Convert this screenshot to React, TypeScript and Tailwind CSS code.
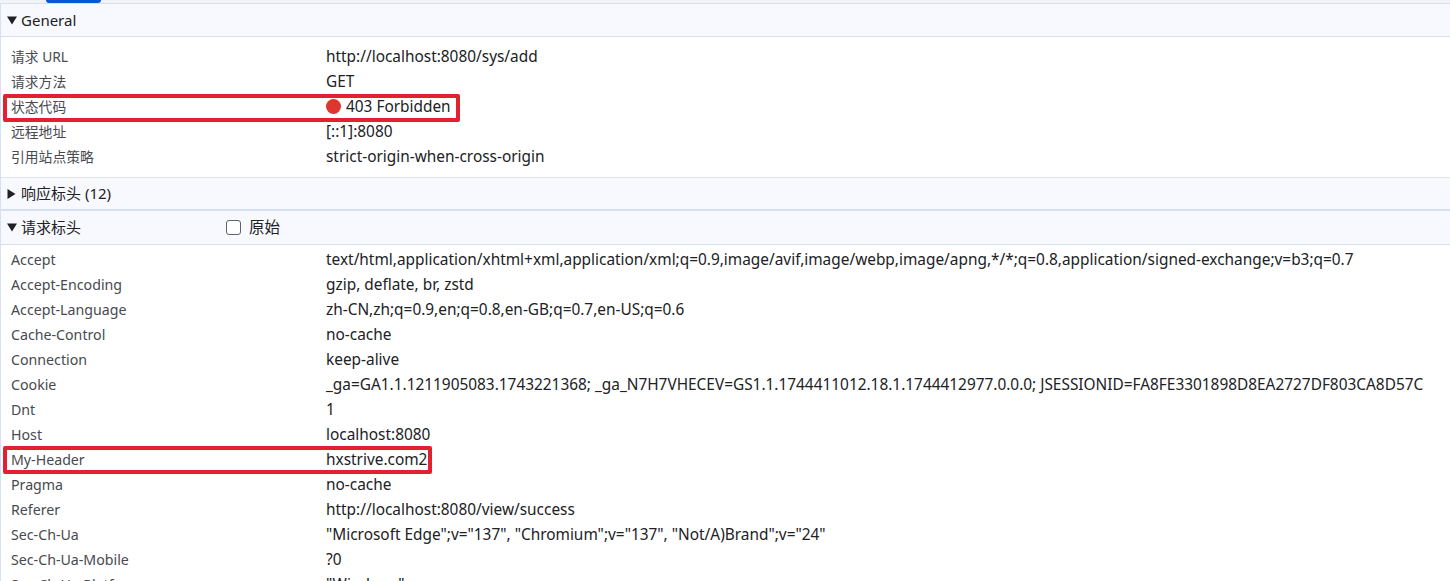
const font = { cjk: "font-['Noto_Sans','Noto_Sans_CJK_SC',sans-serif]" }

const general = [
  ["请求 URL", "http://localhost:8080/sys/add"],
  ["请求方法", "GET"],
  ["状态代码", "403 Forbidden"],
  ["远程地址", "[::1]:8080"],
  ["引用站点策略", "strict-origin-when-cross-origin"],
]

const requestHeaders = [
  ["Accept", "text/html,application/xhtml+xml,application/xml;q=0.9,image/avif,image/webp,image/apng,*/*;q=0.8,application/signed-exchange;v=b3;q=0.7"],
  ["Accept-Encoding", "gzip, deflate, br, zstd"],
  ["Accept-Language", "zh-CN,zh;q=0.9,en;q=0.8,en-GB;q=0.7,en-US;q=0.6"],
  ["Cache-Control", "no-cache"],
  ["Connection", "keep-alive"],
  ["Cookie", "_ga=GA1.1.1211905083.1743221368; _ga_N7H7VHECEV=GS1.1.1744411012.18.1.1744412977.0.0.0; JSESSIONID=FA8FE3301898D8EA2727DF803CA8D57C"],
  ["Dnt", "1"],
  ["Host", "localhost:8080"],
  ["My-Header", "hxstrive.com2"],
  ["Pragma", "no-cache"],
  ["Referer", "http://localhost:8080/view/success"],
  ["Sec-Ch-Ua", "\"Microsoft Edge\";v=\"137\", \"Chromium\";v=\"137\", \"Not/A)Brand\";v=\"24\""],
  ["Sec-Ch-Ua-Mobile", "?0"],
  ["Sec-Ch-Ua-Platform", "\"Windows\""],
]

function Row({ name, value, nameSize }: { name: string; value: string; nameSize: string }) {
  return (
    <div className="flex h-[25px] items-center whitespace-nowrap">
      <div className={`w-[325px] shrink-0 pl-[10px] text-[#474a50] ${nameSize}`}>{name}</div>
      <div className="flex items-center text-[15.4px] text-[#202124]">
        {value === "403 Forbidden" && <span className="mr-[5px] h-[15px] w-[15px] rounded-full bg-[#dc362e]" />}
        {value}
      </div>
    </div>
  )
}

function Header({ open, title, h, children }: { open: boolean; title: string; h: string; children?: React.ReactNode }) {
  return (
    <div className={`flex ${h} items-center border-[#d6e0f5] bg-[#f8f9fe] pl-[6px] text-[15px] text-[#202124]`}>
      {open ? (
        <svg width="10" height="9" viewBox="0 0 10 9" className="mr-[4px]"><path d="M0 0.5h10L5 8.5z" fill="#202124" /></svg>
      ) : (
        <svg width="9" height="10" viewBox="0 0 9 10" className="mr-[5px]"><path d="M0.5 0v10L8.5 5z" fill="#202124" /></svg>
      )}
      <span>{title}</span>
      {children}
    </div>
  )
}

export default function App() {
  return (
    <div className={`relative h-[581px] w-[1450px] overflow-hidden bg-white leading-[25px] ${font.cjk}`}>
      <div className="h-[4px] border-b border-[#d6e0f5] bg-[#f1f3f9] pl-[46px]">
        <div className="h-[3px] w-[55px] rounded-b-[3px] bg-[#0b57d0]" />
      </div>
      <div className="border-l border-[#d6e0f5]">
        <Header open title="General" h="h-[33px] border-b" />
        <div className="border-b border-[#e0e3e8] pt-[7px] pb-[8px]">
          {general.map(([name, value]) => <Row key={name} name={name} value={value} nameSize="text-[13.8px]" />)}
        </div>
        <Header open={false} title="响应标头 (12)" h="h-[33px] border-b-2" />
        <Header open title="请求标头" h="h-[34px] border-b pb-[1px]">
          <span className="ml-[145px] h-[15px] w-[15px] rounded-[3px] border border-[#5f6368] bg-white" />
          <span className="ml-[8px] text-[15.5px]">原始</span>
        </Header>
        <div className="pt-[2px]">
          {requestHeaders.map(([name, value]) => <Row key={name} name={name} value={value} nameSize="text-[14.2px]" />)}
        </div>
      </div>
      <div className="absolute left-[3px] top-[94px] h-[28px] w-[457px] rounded-[2px] border-4 border-[#e3202f]" />
      <div className="absolute left-[3px] top-[446px] h-[28px] w-[429px] rounded-[2px] border-4 border-[#e3202f]" />
    </div>
  )
}
